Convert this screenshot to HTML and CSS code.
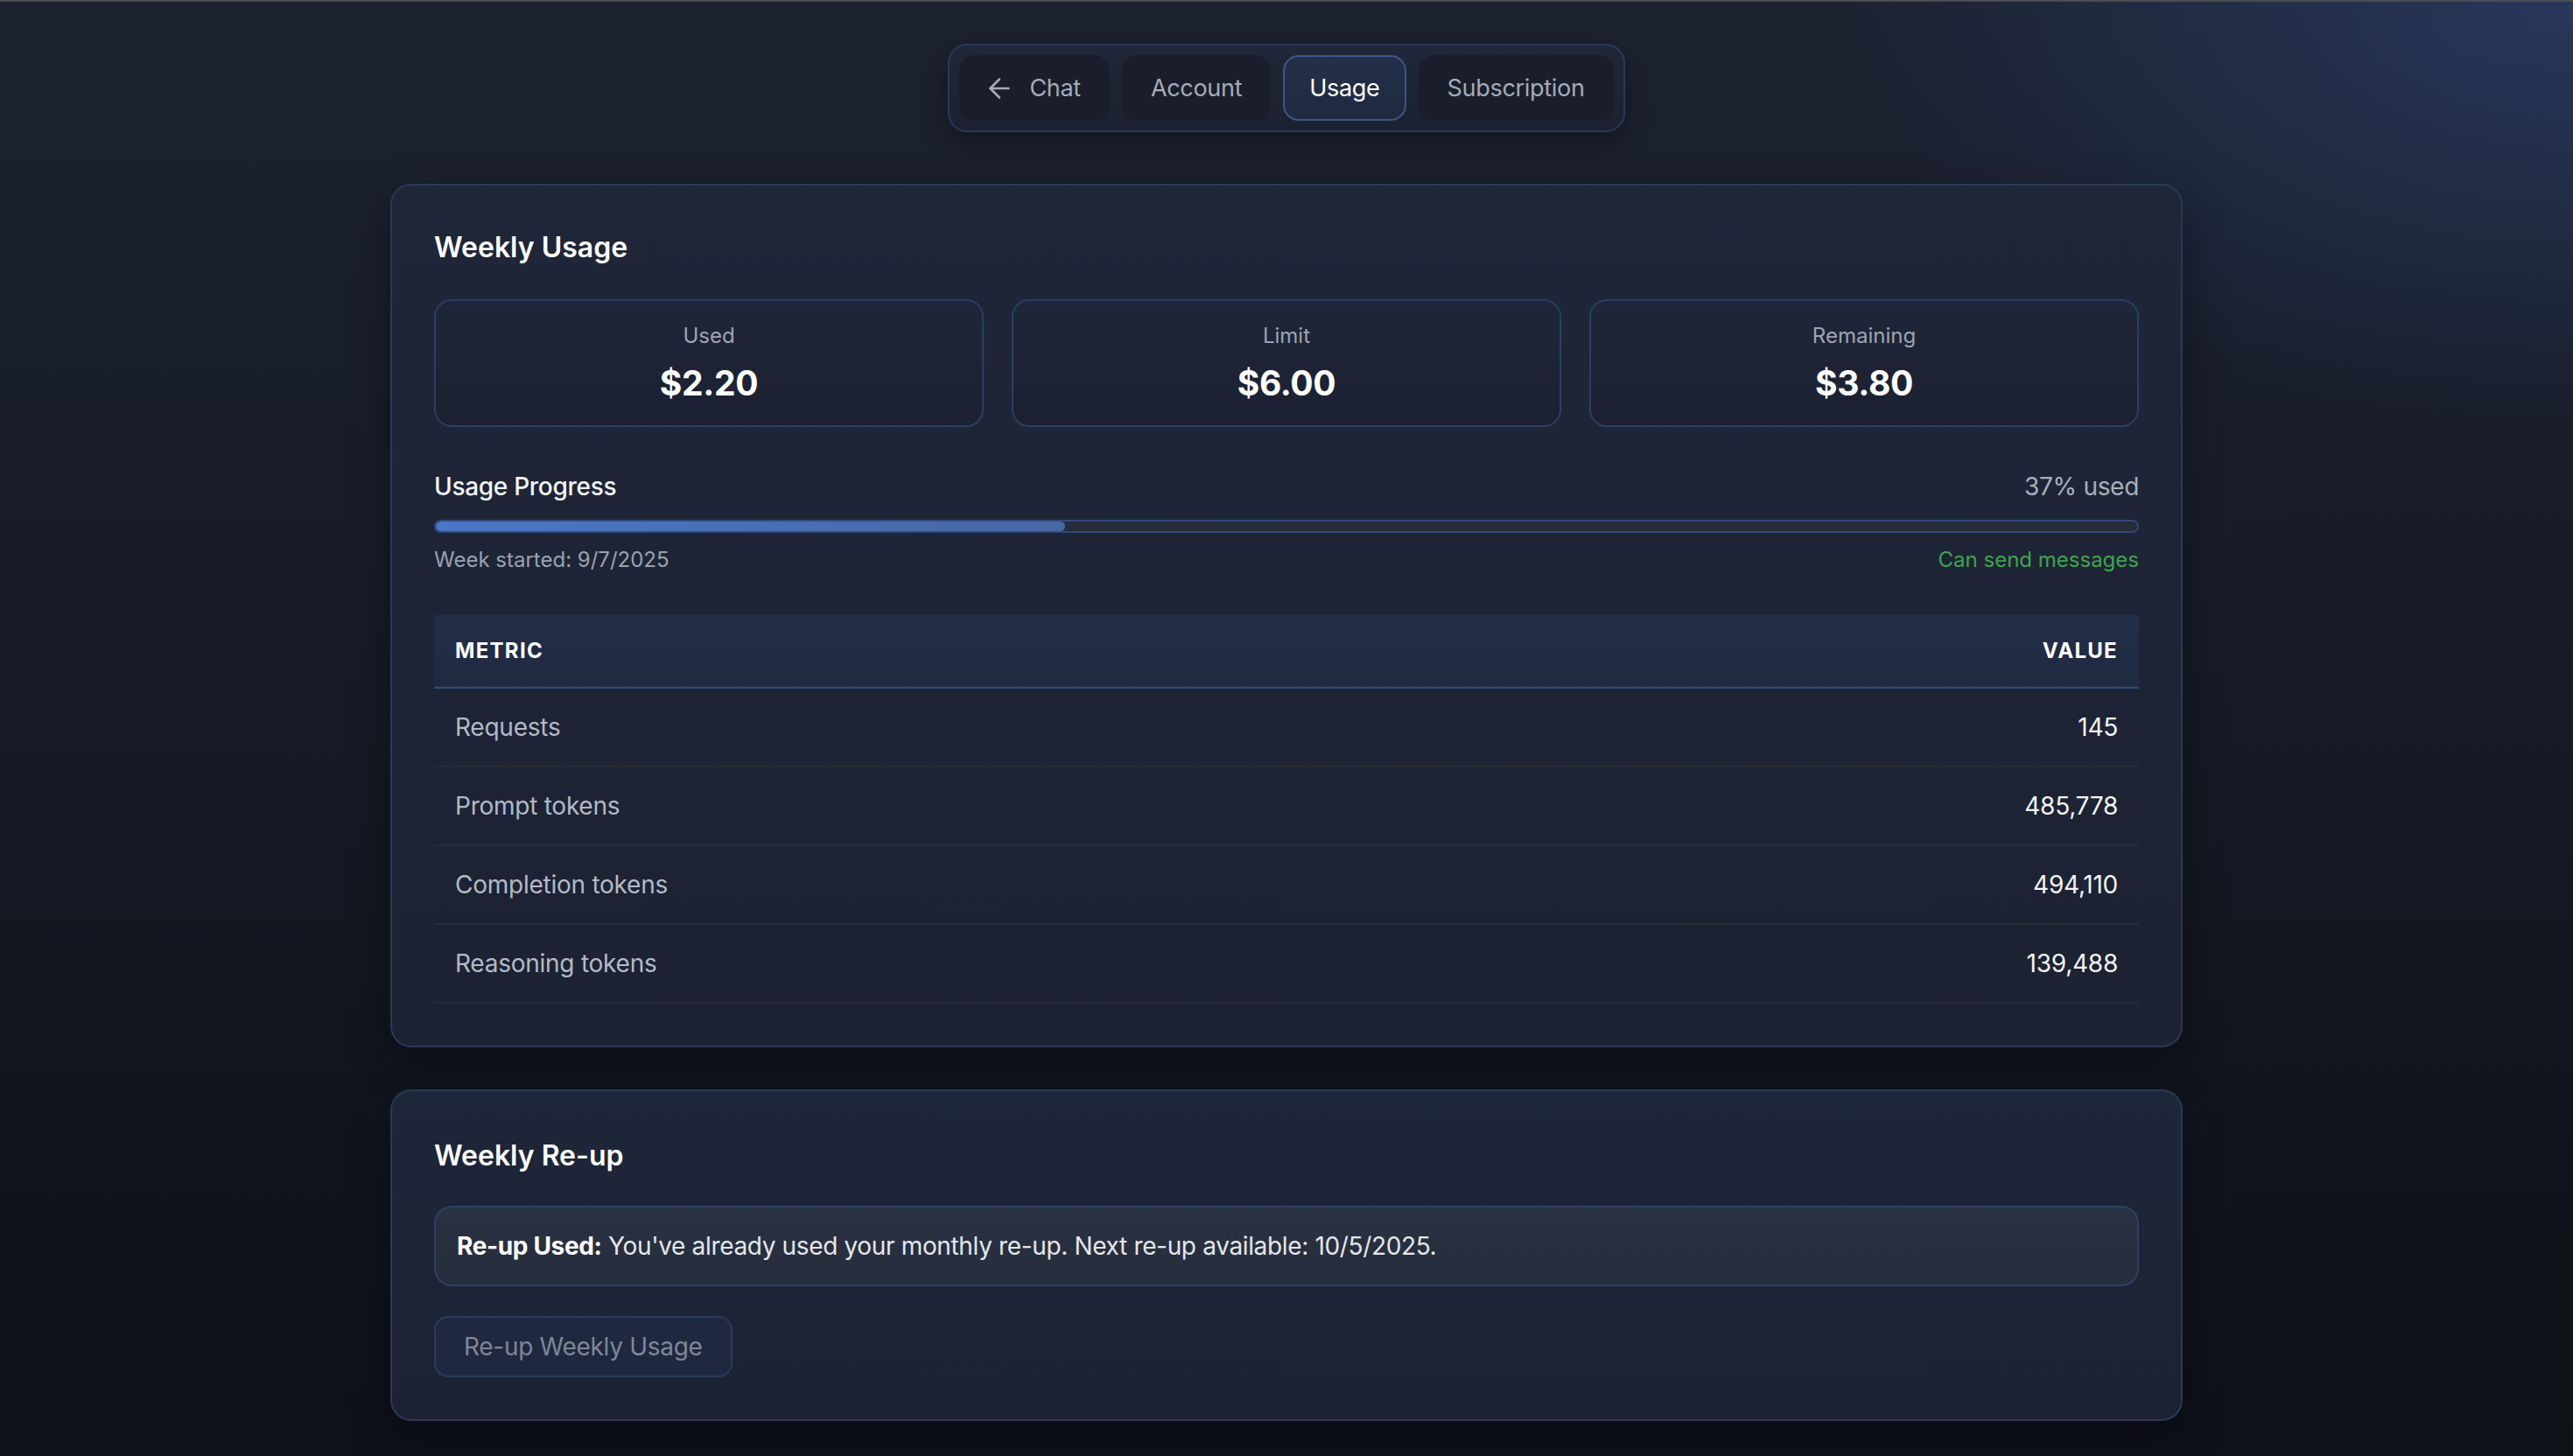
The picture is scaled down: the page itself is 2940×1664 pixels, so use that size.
FILE: index.html
```html
<!DOCTYPE html>
<html lang="en">
<head>
<meta charset="utf-8">
<title>Usage</title>
<link rel="stylesheet" href="styles.css">
</head>
<body>
<div class="topline"></div>
<div class="page">
  <nav class="nav">
    <button class="nav-btn nav-chat">
      <svg class="nav-icon" viewBox="0 0 24 24" width="36" height="36" fill="none" stroke="currentColor" stroke-width="1.7" stroke-linecap="round" stroke-linejoin="round"><path d="M19 12H5"/><path d="M12 19l-7-7 7-7"/></svg>
      <span>Chat</span>
    </button>
    <button class="nav-btn">Account</button>
    <button class="nav-btn active">Usage</button>
    <button class="nav-btn">Subscription</button>
  </nav>

  <section class="card">
    <h2 class="card-title">Weekly Usage</h2>
    <div class="stats">
      <div class="stat">
        <div class="stat-label">Used</div>
        <div class="stat-value">$2.20</div>
      </div>
      <div class="stat">
        <div class="stat-label">Limit</div>
        <div class="stat-value">$6.00</div>
      </div>
      <div class="stat">
        <div class="stat-label">Remaining</div>
        <div class="stat-value">$3.80</div>
      </div>
    </div>

    <div class="progress">
      <div class="progress-head">
        <span class="progress-title">Usage Progress</span>
        <span class="progress-pct">37% used</span>
      </div>
      <div class="bar"><div class="bar-fill" style="width: 37%"></div></div>
      <div class="progress-meta">
        <span class="week">Week started: 9/7/2025</span>
        <span class="ok">Can send messages</span>
      </div>
    </div>

    <table class="metrics">
      <thead>
        <tr><th class="th-left">Metric</th><th class="th-right">Value</th></tr>
      </thead>
      <tbody>
        <tr><td class="m-label">Requests</td><td class="m-val">145</td></tr>
        <tr><td class="m-label">Prompt tokens</td><td class="m-val">485,778</td></tr>
        <tr><td class="m-label">Completion tokens</td><td class="m-val">494,110</td></tr>
        <tr><td class="m-label">Reasoning tokens</td><td class="m-val">139,488</td></tr>
      </tbody>
    </table>
  </section>

  <section class="card card-reup">
    <h2 class="card-title">Weekly Re-up</h2>
    <div class="alert"><strong>Re-up Used:</strong> You've already used your monthly re-up. Next re-up available: 10/5/2025.</div>
    <button class="reup-btn" disabled>Re-up Weekly Usage</button>
  </section>
</div>
</body>
</html>
```

FILE: styles.css
```css
* { box-sizing: border-box; }

html, body {
  margin: 0;
  padding: 0;
}

body {
  min-height: 1664px;
  font-family: Inter, "Noto Sans", "Liberation Sans", sans-serif;
  color: #f2f4f7;
  background:
    radial-gradient(ellipse 1100px 650px at 100% 0%, rgba(44, 64, 108, 0.7), rgba(44, 64, 108, 0) 75%),
    linear-gradient(180deg, #1d2231 0%, #171c28 40%, #10141c 80%, #0e1118 100%);
}

.topline {
  height: 2px;
  background: #4b4d50;
}

.page {
  display: flex;
  flex-direction: column;
  align-items: center;
  padding-top: 48px;
  padding-bottom: 40px;
}

/* Nav */
.nav {
  display: flex;
  gap: 14px;
  padding: 11px;
  border: 2px solid #2b3856;
  border-radius: 22px;
  background: linear-gradient(180deg, #202738 0%, #1b2130 100%);
  box-shadow: 0 10px 28px rgba(0, 0, 0, 0.35);
}

.nav-btn {
  display: flex;
  align-items: center;
  height: 75px;
  padding: 0 31px;
  border: 2px solid transparent;
  border-radius: 18px;
  background: #191e2a;
  color: #a4acba;
  font-family: inherit;
  font-size: 27px;
  letter-spacing: -0.3px;
  line-height: 1;
}

.nav-chat {
  padding-left: 26px;
  gap: 16px;
}

.nav-icon {
  display: block;
}

.nav-btn.active {
  padding: 0 28px;
  background: linear-gradient(180deg, #24304b 0%, #1f2940 100%);
  border-color: #3b5787;
  color: #ffffff;
}

/* Cards */
.card {
  width: 2048px;
  margin-top: 59px;
  padding: 48px;
  border: 2px solid #2a3958;
  border-radius: 24px;
  background: linear-gradient(180deg, #1f2638 0%, #1c2232 100%);
  box-shadow: 0 18px 48px rgba(0, 0, 0, 0.4);
}

.card-reup {
  margin-top: 48px;
  background: linear-gradient(180deg, #1e2639 0%, #1c2232 100%);
}

.card-title {
  margin: 0 0 36px;
  font-size: 32px;
  line-height: 46px;
  font-weight: 600;
  color: #ffffff;
}

.card-reup .card-title {
  margin-top: 3px;
  margin-bottom: 34px;
}

/* Stats */
.stats {
  display: grid;
  grid-template-columns: repeat(3, 1fr);
  gap: 32px;
}

.stat {
  padding: 24px;
  border: 2px solid #2c3e62;
  border-radius: 20px;
  background: linear-gradient(180deg, #1f2638 0%, #1b2131 100%);
  text-align: center;
}

.stat-label {
  font-size: 24px;
  line-height: 32px;
  color: #9da5b3;
}

.stat-value {
  margin-top: 14px;
  font-size: 39px;
  line-height: 48px;
  font-weight: 700;
  letter-spacing: -0.3px;
  color: #ffffff;
}

/* Progress */
.progress {
  margin-top: 48px;
}

.progress-head,
.progress-meta {
  display: flex;
  justify-content: space-between;
  align-items: center;
}

.progress-head {
  font-size: 28px;
  line-height: 40px;
  letter-spacing: -0.3px;
}

.progress-title {
  font-weight: 500;
  color: #f3f5f8;
}

.progress-pct {
  color: #a9b0bc;
}

.bar {
  margin-top: 18px;
  height: 15px;
  border: 2px solid #33497a;
  border-radius: 999px;
  background: #262c3a;
  overflow: hidden;
}

.bar-fill {
  height: 100%;
  border-radius: 999px;
  background: linear-gradient(90deg, #4a77c6 0%, #4767a4 100%);
}

.progress-meta {
  margin-top: 15px;
  font-size: 24px;
  line-height: 32px;
}

.week {
  color: #9aa2b0;
}

.ok {
  color: #3fa44e;
}

/* Table */
.metrics {
  width: 100%;
  margin-top: 47px;
  border-collapse: collapse;
}

.metrics thead tr {
  background: linear-gradient(180deg, #232e48 0%, #1f2a41 100%);
  border-bottom: 2px solid #34497a;
}

.metrics th {
  padding: 24px;
  font-size: 24px;
  line-height: 34px;
  font-weight: 700;
  letter-spacing: 1.3px;
  text-transform: uppercase;
  color: #ffffff;
}

.th-left { text-align: left; }
.th-right { text-align: right; }

.metrics tbody tr {
  border-bottom: 2px solid #272c37;
}

.metrics td {
  padding: 24px;
  font-size: 28px;
  line-height: 40px;
  letter-spacing: -0.25px;
}

.m-label {
  color: #b3bac6;
}

.m-val {
  text-align: right;
  color: #f2f4f7;
}

/* Re-up */
.alert {
  padding: 24px;
  border: 2px solid #2f4064;
  border-radius: 20px;
  background: linear-gradient(180deg, #2a3142 0%, #262d3c 100%);
  font-size: 28px;
  line-height: 40px;
  letter-spacing: -0.35px;
  color: #e4e7ec;
}

.alert strong {
  font-weight: 700;
  color: #ffffff;
}

.reup-btn {
  display: block;
  margin-top: 34px;
  height: 70px;
  padding: 0 32px;
  border: 2px solid #2b3b5c;
  border-radius: 16px;
  background: #1f2840;
  color: #7f8796;
  font-family: inherit;
  font-size: 28px;
  letter-spacing: -0.3px;
}
```
